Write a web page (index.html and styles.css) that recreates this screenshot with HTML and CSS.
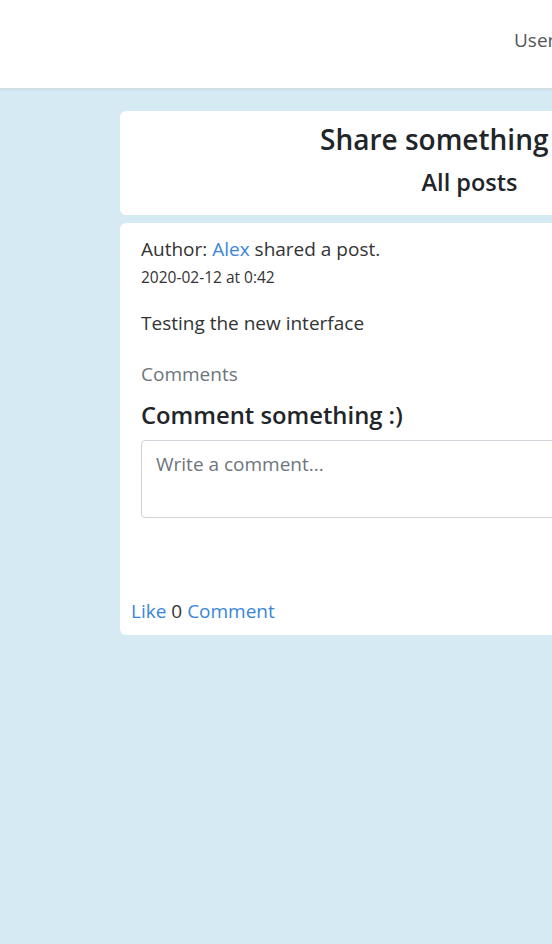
FILE: index.html
```html
<!DOCTYPE html>
<html>
<head>
<meta charset="utf-8">
<link rel="stylesheet" href="styles.css">
</head>
<body>
<nav class="navbar">
  <span class="nav-user">User</span>
</nav>
<main class="feed">
  <section class="card share-card">
    <h1 class="share-title">Share something</h1>
    <h2 class="share-sub">All posts</h2>
  </section>
  <article class="card post">
    <div class="post-body">
      <p class="post-author">Author: <a href="#" class="link">Alex</a> shared a post.</p>
      <p class="post-date">2020-02-12 at 0:42</p>
      <p class="post-text">Testing the new interface</p>
      <p class="comments-label">Comments</p>
      <h3 class="comment-title">Comment something :)</h3>
      <textarea class="comment-input" placeholder="Write a comment..."></textarea>
    </div>
    <div class="post-actions">
      <a href="#" class="link">Like</a> <span class="count">0</span> <a href="#" class="link">Comment</a>
    </div>
  </article>
</main>
</body>
</html>
```

FILE: styles.css
```css
html, body {
  margin: 0;
  padding: 0;
}
body {
  background: #d5eaf3;
  font-family: "Open Sans", "Noto Sans", sans-serif;
  color: #333;
  overflow: hidden;
  width: 552px;
  height: 944px;
}
.navbar {
  height: 89px;
  box-sizing: border-box;
  background: #fff;
  border-bottom: 1px solid #d6dcdf;
  box-shadow: 0 1px 2px rgba(0,0,0,0.06);
  display: flex;
  align-items: flex-start;
  padding: 26px 0 0 514px;
  white-space: nowrap;
  overflow: hidden;
}
.nav-user {
  font-size: 19px;
  line-height: 28px;
  color: #555;
}
.feed {
  display: flex;
  flex-direction: column;
  gap: 8px;
  width: 699px;
  padding: 22px 0 0 120px;
}
.card {
  background: #fff;
  border-radius: 6px;
}
.share-card {
  height: 104px;
  box-sizing: border-box;
  padding-top: 9px;
  text-align: center;
}
.share-title {
  margin: 0;
  padding-left: 200px;
  text-align: left;
  font-size: 28px;
  font-weight: 600;
  line-height: 38px;
  white-space: nowrap;
  color: #212529;
}
.share-sub {
  margin: 8px 0 0;
  font-size: 23.5px;
  font-weight: 600;
  line-height: 32px;
  color: #212529;
}
.post {
  height: 412px;
  display: flex;
  flex-direction: column;
  justify-content: space-between;
}
.post-body {
  padding: 12px 0 0 21px;
}
.post p {
  margin: 0;
}
.post-author,
.post-text,
.comments-label {
  font-size: 19px;
  line-height: 28px;
}
.link {
  color: #3a86d8;
  text-decoration: none;
}
.post .post-date {
  margin-top: 3px;
  font-size: 15.5px;
  line-height: 22px;
}
.post .post-text {
  margin-top: 21px;
}
.post .comments-label {
  margin-top: 23px;
  color: #6c757d;
}
.comment-title {
  margin: 11px 0 0;
  font-size: 23.8px;
  font-weight: 600;
  line-height: 32px;
  color: #212529;
}
.comment-input {
  display: block;
  box-sizing: border-box;
  width: 600px;
  height: 78px;
  margin-top: 9px;
  border: 1px solid #ced4da;
  border-radius: 4px;
  padding: 9px 14px;
  font-family: inherit;
  font-size: 19px;
  line-height: 1.5;
  resize: none;
}
.comment-input::placeholder {
  color: #6c757d;
}
.post-actions {
  padding: 0 0 10px 11px;
  font-size: 19px;
  line-height: 28px;
}
```
